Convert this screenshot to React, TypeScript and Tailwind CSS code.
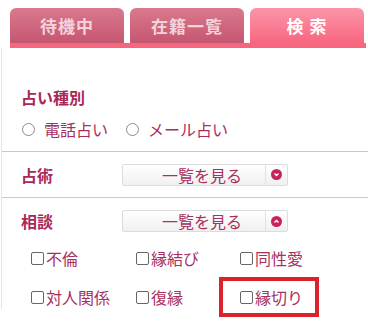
import React from "react";

const font = { fontFamily: '"Noto Sans CJK JP", "Noto Sans", sans-serif' };

function Tab({ label, active }: { label: string; active?: boolean }) {
  return (
    <div
      className={
        "w-[114px] h-[35px] rounded-t-[6px] flex items-center justify-center text-[17px] font-bold tracking-[1px] " +
        (active
          ? "bg-gradient-to-b from-[#fb95aa] to-[#f7667f] text-white"
          : "bg-gradient-to-b from-[#d9798e] to-[#c5566f] text-[#f3d3db]")
      }
    >
      {label}
    </div>
  );
}

function Radio({ label }: { label: string }) {
  return (
    <div className="flex items-center">
      <span className="w-[13px] h-[13px] rounded-full border border-[#8a8a8a] bg-white" />
      <span className="ml-[9px] text-[16px] text-[#a8305f]">{label}</span>
    </div>
  );
}

function Select({ up }: { up?: boolean }) {
  return (
    <div className="w-[166px] h-[22px] border border-[#dcdcdc] rounded-[2px] bg-gradient-to-b from-white to-[#f0f0f0] flex items-center">
      <div className="flex-1 text-center text-[16px] leading-none text-[#a8305f] pl-[16px]">一覧を見る</div>
      <div className="w-[22px] h-full border-l border-[#e2e2e2] flex items-center justify-center">
        <svg width="11" height="11" viewBox="0 0 11 11">
          <circle cx="5.5" cy="5.5" r="5.5" fill="#c8245c" />
          {up ? (
            <path d="M3.5 6.5 L5.5 4.5 L7.5 6.5" stroke="white" strokeWidth="1.4" fill="none" />
          ) : (
            <path d="M3.5 4.5 L5.5 6.5 L7.5 4.5" stroke="white" strokeWidth="1.4" fill="none" />
          )}
        </svg>
      </div>
    </div>
  );
}

function Check({ label }: { label: string }) {
  return (
    <div className="flex items-center h-[24px]">
      <span className="w-[13px] h-[13px] border border-[#666] rounded-[2px] bg-white" />
      <span className="ml-[2px] text-[16px] text-[#a8305f]">{label}</span>
    </div>
  );
}

export default function App() {
  return (
    <div className="w-[368px] h-[326px] bg-white overflow-hidden" style={font}>
      <div className="pt-[8px] pl-[10px]">
        <div className="flex gap-[6px]">
          <Tab label="待機中" />
          <Tab label="在籍一覧" />
          <Tab label="検 索" active />
        </div>
        <div className="h-[5px] bg-[#f7667f] mr-[2px]" />
      </div>
      <div className="border-l border-[#e6e6e6] ml-[1px]">
        <div className="pt-[39px] pl-[19px] pb-[10px]">
          <div className="text-[16px] font-bold text-[#a8285a] leading-[20px]">占い種別</div>
          <div className="flex items-center gap-[18px] mt-[10px] pl-[1px]">
            <Radio label="電話占い" />
            <Radio label="メール占い" />
          </div>
        </div>
        <div className="h-[1px] bg-[#eab7c8]" />
        <div className="h-[45px] flex items-center pl-[19px]">
          <div className="w-[101px] text-[16px] font-bold text-[#a8285a]">占術</div>
          <Select />
        </div>
        <div className="h-[1px] bg-[#eab7c8]" />
        <div className="pt-[11px] pl-[19px]">
          <div className="flex items-center">
            <div className="w-[101px] text-[16px] font-bold text-[#a8285a]">相談</div>
            <Select up />
          </div>
          <div className="grid grid-cols-[105px_104px_100px] pl-[10px] mt-[13px] gap-y-[15px] items-center">
            <Check label="不倫" />
            <Check label="縁結び" />
            <Check label="同性愛" />
            <Check label="対人関係" />
            <Check label="復縁" />
            <div className="relative">
              <Check label="縁切り" />
              <div className="absolute left-[-21px] top-[-8px] w-[100px] h-[40px] border-[4px] border-[#d9222c]" />
            </div>
          </div>
        </div>
      </div>
    </div>
  );
}
